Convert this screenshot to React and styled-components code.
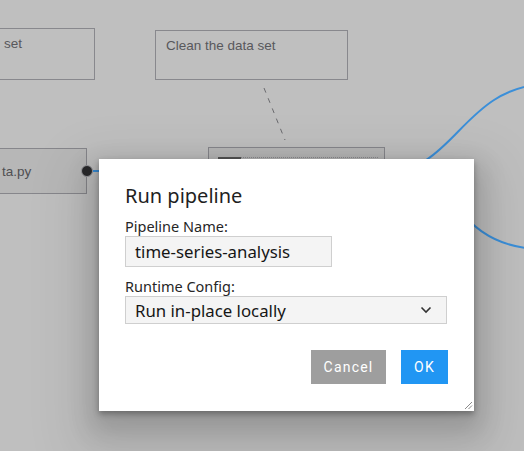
import React from "react";
import styled, { createGlobalStyle } from "styled-components";

const Global = createGlobalStyle`
  html, body { margin: 0; padding: 0; }
  body { width: 524px; height: 451px; overflow: hidden; background: #bfbfbf; }
  * { box-sizing: border-box; }
`;

const Canvas = styled.div`
  position: relative;
  width: 524px;
  height: 451px;
  overflow: hidden;
  background: #bfbfbf;
  font-family: "Liberation Sans", Arial, sans-serif;
`;

const Comment = styled.div`
  position: absolute;
  left: ${(p) => p.$x}px;
  top: ${(p) => p.$y}px;
  width: ${(p) => p.$w}px;
  height: ${(p) => p.$h}px;
  border: 1px solid #88888d;
  padding: 7px 0 0 ${(p) => p.$pl}px;
  font-size: 13.5px;
  color: #58585c;
  white-space: nowrap;
`;

const NodeBox = styled.div`
  position: absolute;
  left: ${(p) => p.$x}px;
  top: ${(p) => p.$y}px;
  width: ${(p) => p.$w}px;
  height: ${(p) => p.$h}px;
  border: 1px solid #86868b;
  background: #b7b7b7;
  display: flex;
  align-items: center;
  padding: 0 0 0 ${(p) => p.$pl}px;
  font-size: 13.5px;
  color: #4f4f52;
  white-space: nowrap;
`;

const NodeHeader = styled.div`
  position: absolute;
  left: 10px;
  right: 6px;
  top: 9px;
  border-top: 1px dotted #8e8e92;
`;

const NodeIcon = styled.div`
  position: absolute;
  left: 9px;
  top: 9px;
  width: 23px;
  height: 14px;
  border: 2px solid #555;
  border-bottom: none;
`;

const Port = styled.div`
  position: absolute;
  left: ${(p) => p.$x - 6}px;
  top: ${(p) => p.$y - 6}px;
  width: 12px;
  height: 12px;
  border-radius: 50%;
  background: #2a2a2c;
  border: 1.5px solid #9c9ca0;
`;

const Links = styled.svg`
  position: absolute;
  left: 0;
  top: 0;
`;

const Dialog = styled.div`
  position: absolute;
  left: 99px;
  top: 159px;
  width: 375px;
  height: 252px;
  background: #ffffff;
  box-shadow: 0 3px 6px rgba(0, 0, 0, 0.3), 0 12px 24px 8px rgba(0, 0, 0, 0.14),
    0 24px 50px 24px rgba(0, 0, 0, 0.09);
  padding: 24px 26px 0 26px;
  font-family: "Noto Sans", "Open Sans", sans-serif;
  color: #161616;
  display: flex;
  flex-direction: column;
`;

const Title = styled.h2`
  margin: 0 0 9px 0;
  font-size: 20px;
  font-weight: 400;
  line-height: 26px;
  color: #1f1f1f;
`;

const Label = styled.label`
  display: block;
  font-size: 14.5px;
  line-height: 17px;
  color: #262626;
  margin-bottom: 1px;
`;

const Field = styled.div`
  width: ${(p) => p.$w}px;
  height: ${(p) => p.$h}px;
  background: #f4f4f4;
  border: 1px solid #cfcfcf;
  display: flex;
  align-items: center;
  justify-content: space-between;
  padding: 0 14px 0 9px;
  font-size: 16.8px;
  color: #161616;
  margin-bottom: ${(p) => p.$mb}px;
`;

const Chevron = styled.svg`
  width: 12px;
  height: 8px;
`;

const Buttons = styled.div`
  display: flex;
  justify-content: flex-end;
  gap: 15px;
  margin-top: 26px;
  width: 323px;
`;

const Button = styled.div`
  height: 34px;
  width: ${(p) => p.$w}px;
  background: ${(p) => p.$bg};
  color: #ffffff;
  font-family: Roboto, "Noto Sans", sans-serif;
  font-size: 14px;
  letter-spacing: 1.2px;
  display: flex;
  align-items: center;
  justify-content: center;
`;

const Grip = styled.svg`
  position: absolute;
  right: 1px;
  bottom: 1px;
`;

export default function App() {
  return (
    <>
      <Global />
      <Canvas>
        <Comment $x={-110} $y={28} $w={205} $h={52} $pl={113}>
          set
        </Comment>
        <Comment $x={155} $y={30} $w={193} $h={50} $pl={10}>
          Clean the data set
        </Comment>
        <NodeBox $x={-100} $y={148} $w={187} $h={46} $pl={101}>
          ta.py
        </NodeBox>
        <NodeBox $x={208} $y={147} $w={177} $h={70} $pl={10}>
          <NodeHeader />
          <NodeIcon />
        </NodeBox>
        <Links width="524" height="451">
          <line x1="264" y1="88" x2="285" y2="140" stroke="#6a6a6e" strokeWidth="1" strokeDasharray="5 6" />
          <path d="M 385 172 C 455 172, 462 88, 545 84" fill="none" stroke="#3b8fd9" strokeWidth="2" />
          <path d="M 430 180 C 470 225, 490 248, 540 249" fill="none" stroke="#3b8fd9" strokeWidth="2" />
          <line x1="93" y1="171" x2="110" y2="171" stroke="#3b8fd9" strokeWidth="2" />
        </Links>
        <Port $x={87} $y={171} />
        <Dialog>
          <Title>Run pipeline</Title>
          <Label>Pipeline Name:</Label>
          <Field $w={207} $h={31} $mb={11}>time-series-analysis</Field>
          <Label>Runtime Config:</Label>
          <Field $w={322} $h={28} $mb={0}>
            <span>Run in-place locally</span>
            <Chevron viewBox="0 0 12 8">
              <path d="M1.5 1.5 L6 6 L10.5 1.5" fill="none" stroke="#333" strokeWidth="1.6" />
            </Chevron>
          </Field>
          <Buttons>
            <Button $w={75} $bg="#9e9e9e">Cancel</Button>
            <Button $w={47} $bg="#2196f3">OK</Button>
          </Buttons>
          <Grip width="10" height="10" viewBox="0 0 10 10">
            <line x1="2" y1="9" x2="9" y2="2" stroke="#8a8a8a" strokeWidth="1" />
            <line x1="5.5" y1="9" x2="9" y2="5.5" stroke="#8a8a8a" strokeWidth="1" />
          </Grip>
        </Dialog>
      </Canvas>
    </>
  );
}
